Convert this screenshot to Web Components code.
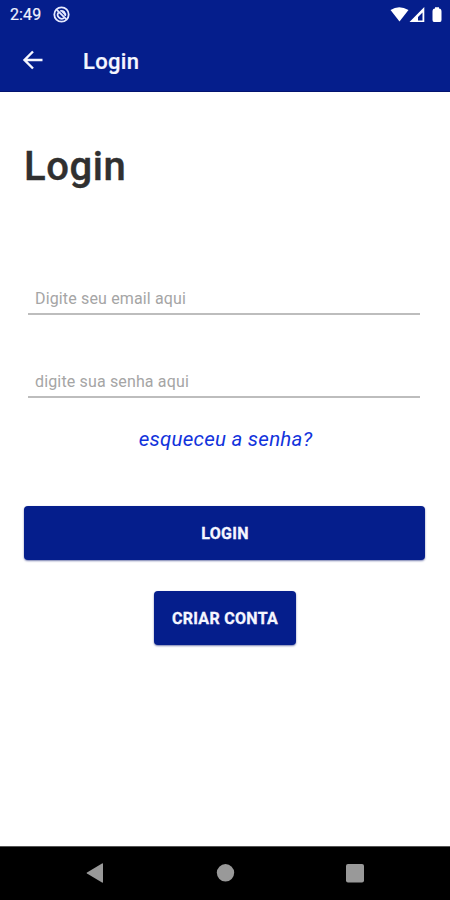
<!DOCTYPE html>
<html lang="pt-BR">
<head>
<meta charset="utf-8">
<title>Login</title>
<style>
html,body{margin:0;height:100%;background:#fff;overflow:hidden}
body{font-family:Roboto,"Liberation Sans",sans-serif}
</style>
</head>
<body>
<login-screen></login-screen>
<script>
const define = (name, html) => {
  const t = document.createElement('template');
  t.innerHTML = html;
  customElements.define(name, class extends HTMLElement {
    constructor() {
      super();
      this.attachShadow({mode: 'open'}).appendChild(t.content.cloneNode(true));
    }
  });
};

define('status-bar', `
<style>
:host{display:flex;align-items:center;height:30px;padding:0 8px 0 10px;box-sizing:border-box;background:#051e8c;color:#f0f2ff}
.time{font-size:16px;line-height:30px;width:43px;white-space:nowrap;letter-spacing:.1px;-webkit-text-stroke:.2px}
svg{display:block}
.signals{margin-left:auto}
</style>
<span class="time"><slot></slot></span>
<svg width="18" height="18" viewBox="0 0 18 18" fill="none" stroke="#e6eaff"><circle cx="8.500" cy="8.500" r="7.200" stroke-width="1.800"/><path d="M5.600 6.200A4 4 0 0 0 11 12M7.200 5A4 4 0 0 1 12.200 10" stroke-width="1.700"/><path d="M3.800 3.800 13.200 13.200" stroke-width="1.800"/><path d="M8 5.500h4v4z" fill="#e6eaff" stroke="none"/></svg>
<svg class="signals" width="52" height="18" viewBox="0 0 52 18" fill="#fff"><path d="M.5 4Q9-1.700 18.500 4L9.500 15.500Z"/><path fill-rule="evenodd" d="M34.300 1V16H19.500ZM32.500 6.500 28 11v3.500h4.500Z"/><path d="M45 1.300h4v1.200q2.500 .2 2.500 3v8.500q0 2-1.500 2h-6q-1.500 0-1.500-2V5.500q0-2.800 2.500-3Z"/></svg>
`);

define('app-bar', `
<style>
:host{display:flex;align-items:center;height:62px;padding:0 24px 0 22px;box-sizing:border-box;background:#051e8c;color:#f5f6ff;border-bottom:1px solid #03136f}
svg{display:block;width:22px;height:22px;margin:-1px 39px 0 0}
span{font-size:22px;font-weight:500;line-height:30px;letter-spacing:.3px;-webkit-text-stroke:.2px;padding-top:2px}
</style>
<svg viewBox="0 0 22 22" fill="none" stroke="#f5f6ff" stroke-width="2.400"><path d="M20.500 11H2.500M11 2.500 2.500 11l8.500 8.500"/></svg>
<span><slot></slot></span>
`);

define('text-field', `
<style>
:host{display:block;height:33px;box-sizing:border-box;padding:1px 7px 0;border-bottom:2px solid #bdbdbd;color:#a5a5a5;font-size:16px;letter-spacing:.15px;line-height:31px;white-space:nowrap}
</style>
<slot></slot>
`);

define('action-button', `
<style>
:host{display:flex;align-items:center;justify-content:center;height:54px;box-sizing:border-box;padding-left:1px;background:#051e8c;border-radius:4px;color:#f5f6ff;font-size:16px;font-weight:700;letter-spacing:.3px;-webkit-text-stroke:.3px;box-shadow:0 1px 2px rgba(5,20,110,.55)}
</style>
<slot></slot>
`);

define('nav-bar', `
<style>
:host{display:flex;align-items:center;justify-content:space-between;height:54px;box-sizing:border-box;padding:0 85px 2px 85px;background:#000;border-top:1px solid #555}
svg{display:block}
</style>
<svg width="20" height="20" viewBox="0 0 20 20" fill="#999"><path d="M17 .5Q18 0 18 1v18q0 1-1 .5L2 10.600q-1-.6 0-1.200Z"/></svg>
<svg width="20" height="20" viewBox="0 0 20 20" fill="#999"><circle cx="10.500" cy="9.800" r="8.700"/></svg>
<svg width="20" height="20" viewBox="0 0 20 20" fill="#999"><rect x="1" y="1" width="18" height="18.500" rx="2"/></svg>
`);

define('login-screen', `
<style>
:host{display:flex;flex-direction:column;width:450px;height:900px;background:#fff}
main{flex:1;display:flex;flex-direction:column;padding:51px 25px 0 24px}
h1{margin:0;color:#303030;font-size:40px;line-height:48px;font-weight:500;letter-spacing:.6px;-webkit-text-stroke:.4px}
.fields{display:flex;flex-direction:column;gap:50px;margin:91px 5px 0 4px}
a{align-self:center;margin:27px 0 0 2px;font-size:20.5px;line-height:28px;letter-spacing:.25px;font-style:italic;color:#1233dc;white-space:nowrap}
.login{margin-top:53px}
.create{align-self:center;width:142px;margin-top:31px}
</style>
<status-bar>2:49</status-bar>
<app-bar>Login</app-bar>
<main>
<h1>Login</h1>
<div class="fields"><text-field>Digite seu email aqui</text-field><text-field>digite sua senha aqui</text-field></div>
<a>esqueceu a senha?</a>
<action-button class="login">LOGIN</action-button>
<action-button class="create">CRIAR CONTA</action-button>
</main>
<nav-bar></nav-bar>
`);
</script>
</body>
</html>
